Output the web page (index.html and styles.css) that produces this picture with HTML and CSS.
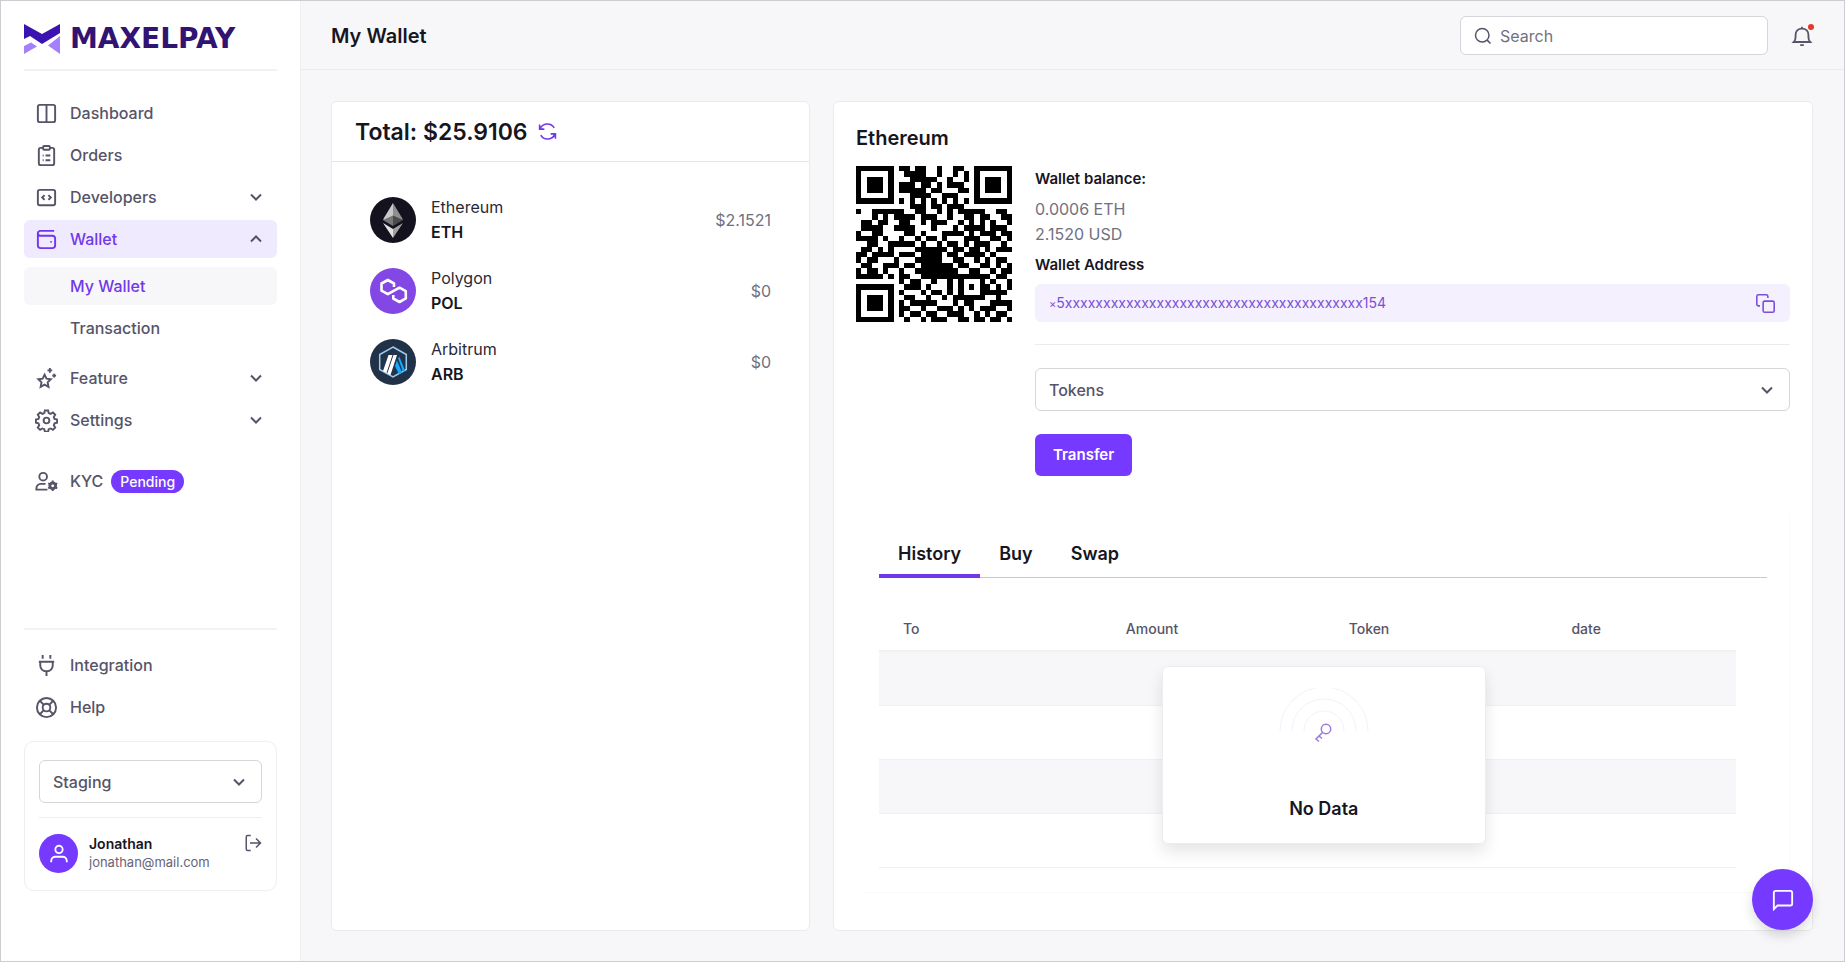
FILE: index.html
```html
<!DOCTYPE html>
<html lang="en">
<head>
<meta charset="utf-8">
<title>My Wallet</title>
<link rel="stylesheet" href="styles.css">
</head>
<body>
<svg class="defs" aria-hidden="true">
  <symbol id="chevron" viewBox="0 0 14 14"><path d="M2 4.500l5 5 5-5"/></symbol>
</svg>
<div class="app">
  <aside class="sidebar">
    <a class="brand" href="#">
      <svg class="brand-mark" viewBox="0 0 36 30" aria-hidden="true">
        <path fill="#3a13b0" d="M0 0L18 10 36 0v9L18 20 6 12 0 15z"/>
        <path fill="#a481fb" d="M0 22l7-3.500 6 4L0 30zM36 12v18L24 21.500z"/>
      </svg>
      <span class="brand-name">MAXELPAY</span>
    </a>
    <nav class="nav">
      <a class="item" href="#"><svg class="icon" viewBox="0 0 24 24"><rect x="3" y="3" width="18" height="18" rx="2"/><path d="M12 3v18"/></svg>Dashboard</a>
      <a class="item" href="#"><svg class="icon" viewBox="0 0 24 24"><path d="M8.500 4H6a2 2 0 0 0-2 2v14a2 2 0 0 0 2 2h12a2 2 0 0 0 2-2V6a2 2 0 0 0-2-2h-2.500"/><rect x="8.500" y="2" width="7" height="4" rx="1"/><path d="M8 12h1M11 12h5M8 17h1M11 17h5"/></svg>Orders</a>
      <button class="item" type="button"><svg class="icon" viewBox="0 0 24 24"><rect x="3" y="4" width="18" height="16" rx="2"/><path d="M10 9.500L7.500 12l2.500 2.500M14 9.500l2.500 2.500-2.500 2.500"/></svg>Developers<svg class="chevron"><use href="#chevron"/></svg></button>
      <button class="item current" type="button"><svg class="icon" viewBox="0 0 24 24"><path d="M20 3H5.500a2.500 2.500 0 0 0-2.500 2.500V18a3 3 0 0 0 3 3h12a3 3 0 0 0 3-3v-7a3 3 0 0 0-3-3H5.500a2.500 2.500 0 0 1-2.500-2.500"/><path d="M16 14.500h1.500"/></svg>Wallet<svg class="chevron up"><use href="#chevron"/></svg></button>
      <div class="subnav">
        <a class="item sub active" href="#">My Wallet</a>
        <a class="item sub" href="#">Transaction</a>
      </div>
      <button class="item" type="button"><svg class="icon" viewBox="0 0 24 24"><path d="M10 8l2 4.200 4.500.6-3.300 3.100.9 4.800L10 18.400 5.900 20.700l.9-4.800-3.300-3.100 4.500-.6zM15.500 1v5M13 3.500h5M20 7v4M18 9h4"/></svg>Feature<svg class="chevron"><use href="#chevron"/></svg></button>
      <button class="item" type="button"><svg class="icon" viewBox="0 0 24 24"><path d="M10.300 1.500h3.400l.6 2.800 2 .8 2.400-1.500 2.400 2.400-1.500 2.400.8 2 2.600.6v3.400l-2.600.6-.8 2 1.500 2.400-2.400 2.400-2.400-1.500-2 .8-.6 2.600h-3.400l-.6-2.600-2-.8-2.400 1.500-2.400-2.400 1.500-2.400-.8-2-2.600-.6v-3.400l2.600-.6.8-2L2.900 6l2.400-2.400 2.400 1.500 2-.8z"/><circle cx="12" cy="12" r="3"/></svg>Settings<svg class="chevron"><use href="#chevron"/></svg></button>
      <a class="item kyc" href="#"><svg class="icon" viewBox="0 0 24 24"><circle cx="8.500" cy="7" r="4"/><path d="M13 20.500H1.500v-1.500a4.500 4.500 0 0 1 4.500-4.500h5"/><circle cx="18.500" cy="16.500" r="3" stroke-width="3"/><path d="M18.500 11v2M18.500 20v2M13.800 13.800l1.700 1M21.500 18.200l1.700 1M13.800 19.200l1.700-1M21.500 14.800l1.700-1"/></svg>KYC<span class="badge">Pending</span></a>
    </nav>
    <nav class="nav secondary">
      <a class="item" href="#"><svg class="icon" viewBox="0 0 24 24"><path d="M8 1v4M16 1v4M4 8h16M5.500 8v4a6 6 0 0 0 6 6h1a6 6 0 0 0 6-6V8M12 18v5"/></svg>Integration</a>
      <a class="item" href="#"><svg class="icon" viewBox="0 0 24 24"><circle cx="12" cy="12" r="10"/><circle cx="12" cy="12" r="4"/><path d="M5 5l4 4M15 15l4 4M19 5l-4 4M9 15l-4 4"/></svg>Help</a>
    </nav>
    <section class="account">
      <div class="select-wrap">
        <select class="select" aria-label="Environment"><option>Staging</option></select>
        <svg class="chevron"><use href="#chevron"/></svg>
      </div>
      <div class="user">
        <span class="avatar"><svg viewBox="0 0 24 24"><circle cx="12" cy="7" r="4"/><path d="M3.500 21v-1.500a4.500 4.500 0 0 1 4.500-4.500h8a4.500 4.500 0 0 1 4.500 4.500V21"/></svg></span>
        <div class="who"><strong>Jonathan</strong><span>jonathan@mail.com</span></div>
        <button class="logout" type="button" aria-label="Log out"><svg viewBox="0 0 24 24"><path d="M9 2H5a2 2 0 0 0-2 2v16a2 2 0 0 0 2 2h4M8 12h14M16 6l6 6-6 6"/></svg></button>
      </div>
    </section>
  </aside>

  <div class="page">
    <header class="topbar">
      <h1>My Wallet</h1>
      <label class="search">
        <svg viewBox="0 0 24 24"><circle cx="11" cy="11" r="9"/><path d="M17.500 17.500L22 22"/></svg>
        <input type="search" placeholder="Search" aria-label="Search">
      </label>
      <button class="bell" type="button" aria-label="Notifications">
        <svg viewBox="0 0 24 24"><path d="M3 18.500h18c-1.500-1.500-2-3-2-5.500v-2c0-4-2.500-7-7-7s-7 3-7 7v2c0 2.500-.5 4-2 5.500zM12 4V2M10 22h4"/></svg>
        <span class="dot"></span>
      </button>
    </header>

    <main class="content">
      <section class="card balances">
        <header class="total">
          <h2>Total: $25.9106</h2>
          <button type="button" aria-label="Refresh"><svg viewBox="0 0 24 24"><path d="M2 3v6h6M2.500 9A10 10 0 0 1 20.500 7.500M22 21v-6h-6M21.500 15A10 10 0 0 1 3.500 16.500"/></svg></button>
        </header>
        <ul class="coins">
          <li>
            <svg class="coin" viewBox="0 0 46 46"><circle cx="23" cy="23" r="23" fill="#15121f"/><path fill="#c9c9c9" d="M23 6v20l-10-3.500z"/><path fill="#8f8f8f" d="M23 6v20l10-3.500z"/><path fill="#777" d="M23 18.500v10.500l-10-6z"/><path fill="#4b4b4b" d="M23 18.500v10.500l10-6z"/><path fill="#e2e2e2" d="M13 26l10 6v9z"/><path fill="#a0a0a0" d="M33 26l-10 6v9z"/></svg>
            <div class="coin-name"><span>Ethereum</span><strong>ETH</strong></div><span class="value">$2.1521</span>
          </li>
          <li>
            <svg class="coin" viewBox="0 0 46 46"><circle cx="23" cy="23" r="23" fill="#8247e5"/><path fill="none" stroke="#fff" stroke-width="2.600" stroke-linejoin="round" d="M24 19v-3.500l-6.200-3.500-6.300 3.500v7.200l6.300 3.500 11.700-6.500 6.300 3.500v7.200L29.500 34l-6.200-3.500v-3.500"/></svg>
            <div class="coin-name"><span>Polygon</span><strong>POL</strong></div><span class="value">$0</span>
          </li>
          <li>
            <svg class="coin" viewBox="0 0 46 46"><circle cx="23" cy="23" r="23" fill="#213147"/><path fill="#22344c" stroke="#9dcced" stroke-width="1.500" d="M23 8l13.300 7.500v15L23 38 9.700 30.500v-15z"/><path fill="#fff" d="M18.500 16h4l-6 18-3.500-2zM23.500 16h3.500l-6.500 20-3.200-1.500z"/><path fill="#12aaff" d="M25 27l2-5.500 5 12-3 1.700zM28 19l1.500-1 5.500 13.500-2 1.500z"/></svg>
            <div class="coin-name"><span>Arbitrum</span><strong>ARB</strong></div><span class="value">$0</span>
          </li>
        </ul>
      </section>

      <section class="card detail">
        <h2>Ethereum</h2>
        <div class="overview">
          <svg class="qr" id="qr" viewBox="0 0 29 29" shape-rendering="crispEdges" role="img" aria-label="Wallet QR code"></svg>
          <div class="info">
            <h3>Wallet balance:</h3>
            <p>0.0006 ETH</p>
            <p>2.1520 USD</p>
            <h3>Wallet Address</h3>
            <div class="address">
              <span><small>×</small>5xxxxxxxxxxxxxxxxxxxxxxxxxxxxxxxxxxxxxxx154</span>
              <button type="button" aria-label="Copy address"><svg viewBox="0 0 24 24"><rect x="9" y="9" width="14" height="14" rx="2"/><path d="M5 15H3a2 2 0 0 1-2-2V3a2 2 0 0 1 2-2h10a2 2 0 0 1 2 2v2"/></svg></button>
            </div>
            <hr>
            <div class="select-wrap">
              <select class="select" aria-label="Tokens"><option>Tokens</option></select>
              <svg class="chevron"><use href="#chevron"/></svg>
            </div>
            <button class="transfer" type="button">Transfer</button>
          </div>
        </div>
        <div class="activity">
          <div class="tabs" role="tablist">
            <button type="button" role="tab" aria-selected="true">History</button>
            <button type="button" role="tab" aria-selected="false">Buy</button>
            <button type="button" role="tab" aria-selected="false">Swap</button>
          </div>
          <div class="table-wrap">
            <table>
              <colgroup><col class="wide"><col class="wide"><col class="wide"><col></colgroup>
              <thead><tr><th>To</th><th>Amount</th><th>Token</th><th>date</th></tr></thead>
              <tbody>
                <tr><td colspan="4"></td></tr>
                <tr><td colspan="4"></td></tr>
                <tr><td colspan="4"></td></tr>
                <tr><td colspan="4"></td></tr>
              </tbody>
            </table>
            <div class="empty">
              <svg viewBox="0 0 96 72"><g stroke="#f3f2fa"><path d="M4 43a44 44 0 0 1 88 0"/><path d="M16 43a32 32 0 0 1 64 0"/><path d="M28 43a20 20 0 0 1 40 0"/></g><g stroke="#9a78e2" stroke-width="1.500"><circle cx="50" cy="41" r="4.700"/><path d="M46.500 44.500L40 51l3 2.500M43 48l3 2.500"/></g></svg>
              <strong>No Data</strong>
            </div>
          </div>
        </div>
      </section>
    </main>
  </div>
</div>
<button class="chat" type="button" aria-label="Open chat"><svg viewBox="0 0 24 24"><path d="M2 22V4a2 2 0 0 1 2-2h16a2 2 0 0 1 2 2v12a2 2 0 0 1-2 2H6z"/></svg></button>
<script src="qr.js"></script>
</body>
</html>
```

FILE: styles.css
```css
* { box-sizing: border-box; }
body {
  margin: 0;
  font: 400 16px/24px Inter, "Liberation Sans", sans-serif;
  color: #17161f;
  background: #f7f7fa;
}
h1, h2, h3, p, ul { margin: 0; padding: 0; }
button, input, select { font: inherit; color: inherit; }
button { border: 0; padding: 0; background: none; cursor: pointer; }
a { color: inherit; text-decoration: none; }
svg { fill: none; stroke: currentColor; stroke-width: 2; flex: none; display: block; }
.brand-mark, .coin { stroke: none; }
.defs { position: absolute; width: 0; height: 0; }

.app {
  display: grid;
  grid-template-columns: 300px 1fr;
  min-height: 100vh;
  border: 1px solid #cdcdd1;
}

.sidebar {
  display: flex;
  flex-direction: column;
  padding: 0 23px 70px;
  background: #fff;
  border-right: 1px solid #f0f0f3;
}
.brand {
  display: flex;
  align-items: center;
  gap: 10px;
  height: 70px;
  padding-top: 7px;
  border-bottom: 2px solid #f1f1f4;
}
.brand-mark { width: 36px; height: 30px; }
.brand-name { font: 700 28px/30px "DejaVu Sans", sans-serif; color: #321373; }
.nav { display: flex; flex-direction: column; gap: 4px; padding-top: 23px; }
.item {
  display: flex;
  align-items: center;
  gap: 12px;
  width: 100%;
  height: 38px;
  padding: 0 14px 0 11px;
  border-radius: 6px;
  font-weight: 500;
  color: #565468;
}
.icon { width: 23px; height: 23px; }
.chevron { width: 14px; height: 14px; margin-left: auto; color: #565468; }
.up { transform: rotate(180deg); }
.current { background: #f0eafe; color: #7138ea; }
.subnav { display: flex; flex-direction: column; gap: 4px; padding: 5px 0 8px; }
.sub { padding-left: 46px; }
.active { background: #f7f7fa; color: #7138ea; }
.kyc { margin-top: 19px; }
.badge {
  margin-left: -4px;
  padding: 0 9px;
  border-radius: 12px;
  background: #7539ff;
  color: #fff;
  font-size: 14px;
  line-height: 23px;
}
.secondary { margin-top: auto; padding-top: 16px; border-top: 2px solid #f3f3f5; }
.account {
  margin-top: 15px;
  padding: 18px 14px 17px;
  border: 1px solid #eeeef1;
  border-radius: 10px;
}
.select-wrap { display: grid; align-items: center; }
.select-wrap > * { grid-area: 1 / 1; }
.select-wrap .chevron { margin-right: 16px; pointer-events: none; }
.select {
  appearance: none;
  width: 100%;
  height: 43px;
  padding: 0 13px;
  border: 1px solid #d5d5da;
  border-radius: 6px;
  background: #fff;
  color: #565468;
  font-weight: 500;
}
.user {
  display: flex;
  gap: 11px;
  margin-top: 14px;
  padding-top: 16px;
  border-top: 1px solid #eeeef1;
}
.avatar {
  display: grid;
  place-items: center;
  width: 39px;
  height: 39px;
  border-radius: 50%;
  background: #7539ff;
  color: #fff;
}
.avatar svg { width: 22px; height: 22px; }
.who { display: flex; flex-direction: column; font-size: 13px; line-height: 19px; color: #666478; }
.who strong { font-size: 14px; font-weight: 600; color: #17161f; }
.logout { align-self: flex-start; margin-left: auto; color: #565468; }
.logout svg { width: 18px; height: 18px; }

.page { display: flex; flex-direction: column; min-width: 0; }
.topbar {
  display: flex;
  align-items: center;
  height: 69px;
  padding: 1px 31px 0 30px;
  border-bottom: 1px solid #ebebee;
}
.topbar h1, .detail h2 { font-size: 20px; font-weight: 600; line-height: 24px; }
.search {
  display: flex;
  align-items: center;
  gap: 8px;
  width: 308px;
  height: 39px;
  margin-left: auto;
  padding: 0 13px;
  border: 1px solid #d5d5da;
  border-radius: 6px;
  background: #fff;
  color: #565468;
}
.search svg { width: 18px; height: 18px; }
.search input { flex: 1; min-width: 0; border: 0; padding: 0; outline: 0; background: none; }
.search input::placeholder { color: #71707f; opacity: 1; }
.bell { position: relative; margin-left: 23px; color: #565468; }
.bell svg { width: 22px; height: 22px; }
.dot { position: absolute; top: -1px; right: -1px; width: 6px; height: 6px; border-radius: 50%; background: #e5382c; }

.content {
  flex: 1;
  display: grid;
  grid-template-columns: 479fr 980fr;
  gap: 23px;
  padding: 31px 31px 30px 30px;
}
.card { border: 1px solid #ebebee; border-radius: 6px; background: #fff; min-width: 0; }
.total {
  display: flex;
  align-items: center;
  gap: 10px;
  height: 60px;
  padding: 0 23px;
  border-bottom: 1px solid #e6e6ea;
}
.total h2 { font-size: 23px; font-weight: 600; line-height: 30px; }
.total button { color: #7138ea; }
.total svg { width: 19px; height: 19px; }
.coins { list-style: none; display: flex; flex-direction: column; gap: 25px; padding: 34px 38px 0; }
.coins li { display: flex; align-items: center; gap: 15px; height: 46px; color: #71707f; padding-top: 1px; }
.coin { width: 46px; height: 46px; }
.coin-name { display: flex; flex-direction: column; line-height: 25px; color: #2a2935; }
.coin-name strong { font-weight: 600; color: #17161f; }
.value { margin-left: auto; }

.detail { padding: 24px 22px 36px; display: flex; flex-direction: column; }
.overview { display: grid; grid-template-columns: 156px 1fr; gap: 23px; margin-top: 16px; align-items: start; }
.qr { width: 156px; height: 156px; stroke: none; fill: #000; }
.info h3 { font-size: 15px; font-weight: 600; line-height: 25px; margin-bottom: 6px; }
.info p { line-height: 25px; color: #71707f; }
.info p + h3 { margin: 5px 0 7px; }
.address {
  display: flex;
  align-items: center;
  justify-content: space-between;
  height: 38px;
  padding: 0 15px 0 14px;
  border-radius: 6px;
  background: #f4f0fe;
  color: #7a50d8;
  font-size: 14px;
}
.address small { font-size: 11px; }
.address svg { width: 19px; height: 19px; }
hr { margin: 22px 0 23px; border: 0; border-top: 1px solid #ebebee; }
.transfer {
  margin-top: 23px;
  height: 42px;
  padding: 0 18px;
  border-radius: 6px;
  background: #7539ff;
  color: #fff;
  font-weight: 600;
  font-size: 15px;
}
.activity {
  margin: 39px 0 0 8px;
  padding: 20px 22px 24px 15px;
  border: solid #fafafb;
  border-width: 0 1px 1px 0;
}
.tabs { display: flex; border-bottom: 1px solid #c9c9cd; }
.tabs button { padding: 5px 19px 6px; margin-bottom: -1px; border-bottom: 4px solid transparent; font-weight: 600; font-size: 18px; line-height: 28px; }
.tabs [aria-selected="true"] { border-color: #7138ea; }
.table-wrap { position: relative; margin: 30px 31px 0 0; }
table { width: 100%; table-layout: fixed; border-collapse: collapse; }
.wide { width: 26%; }
th { height: 43px; padding: 0 24px; text-align: left; font-size: 14px; font-weight: 500; color: #565468; border-bottom: 2px solid #f1f1f4; }
td { height: 54px; padding: 0; border-bottom: 1px solid #f0f0f3; }
tbody tr:nth-child(odd) { background: #f7f7fa; }
.empty {
  position: absolute;
  top: 58px;
  left: 33%;
  width: 324px;
  height: 178px;
  display: flex;
  flex-direction: column;
  align-items: center;
  justify-content: space-between;
  padding: 21px 0 22px;
  border: 1px solid #ededf0;
  border-radius: 6px;
  background: #fff;
  box-shadow: 0 8px 16px rgba(0, 0, 0, .1);
}
.empty svg { width: 96px; height: 72px; stroke-width: 1; }
.empty strong { font-size: 18px; font-weight: 600; }
.chat {
  position: fixed;
  right: 32px;
  bottom: 32px;
  display: grid;
  place-items: center;
  width: 61px;
  height: 61px;
  border-radius: 50%;
  background: #7539ff;
  color: #fff;
  box-shadow: 0 6px 12px rgba(0, 0, 0, .14);
}
.chat svg { width: 22px; height: 22px; }
```

FILE: qr.js
```js
const rows = [
  "11111110110110010011001111111",
  "10000010011110010010101000001",
  "10111010001111100100101011101",
  "10111010111011010111001011101",
  "10111010111110110001101011101",
  "10000010001111001110001000001",
  "11111110101010101010101111111",
  "00000000001110110111000000000",
  "10011111100110010101111100110",
  "00010101111011100100110110011",
  "01101100110010111001010101001",
  "01111001111000100010111101110",
  "10011000011010001111010111011",
  "11110100100101101000111001101",
  "00110011111010010110101110010",
  "01101010000111111011011010111",
  "11011110111011110110111101000",
  "10110001000111110011001010110",
  "01100111011011111101100110101",
  "10110100100111111110011001011",
  "11111010110011111111111110110",
  "00000000101100100101000101001",
  "11111110011101000101010110101",
  "10000010100010110101000111110",
  "10111010011001001011111100100",
  "10111010101111100010110001111",
  "10111010110010011101010111001",
  "10000010101101100111001010110",
  "11111110010010111001101101101"
];

let path = "";
rows.forEach((row, y) => {
  for (const run of row.matchAll(/1+/g)) {
    path += `M${run.index} ${y}h${run[0].length}v1h-${run[0].length}z`;
  }
});
const shape = document.createElementNS("http://www.w3.org/2000/svg", "path");
shape.setAttribute("d", path);
document.getElementById("qr").append(shape);
```
